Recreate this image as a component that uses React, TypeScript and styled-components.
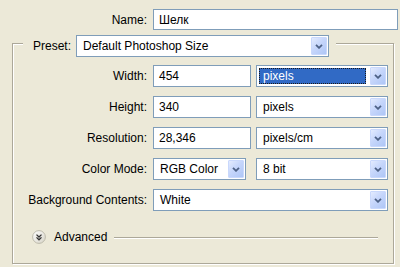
import React from "react";
import styled, { createGlobalStyle } from "styled-components";

const GlobalStyle = createGlobalStyle`
  html, body {
    margin: 0;
    padding: 0;
    background: #ece9d8;
  }
  body {
    font-family: "Liberation Sans", Arial, sans-serif;
    font-size: 12px;
    color: #000;
  }
`;

const Dialog = styled.div`
  width: 400px;
  height: 267px;
  box-sizing: border-box;
  padding-top: 9px;
  overflow: hidden;
  background: #ece9d8;
`;

const NameRow = styled.div`
  display: flex;
  align-items: center;
  gap: 6px;
`;

const Label = styled.span<{ $width?: number }>`
  display: block;
  width: ${(p) => (p.$width ? `${p.$width}px` : "auto")};
  text-align: right;
  white-space: nowrap;
  line-height: 14px;
`;

const TextBox = styled.div<{ $width: number; $height?: number }>`
  box-sizing: border-box;
  width: ${(p) => p.$width}px;
  height: ${(p) => p.$height ?? 22}px;
  border: 1px solid #7f9db9;
  background: #fff;
  padding: 0 5px;
  display: flex;
  align-items: center;
  white-space: nowrap;
  overflow: hidden;
`;

const GroupBox = styled.fieldset`
  margin: 0 6px 0 12px;
  padding: 8px 0 19px 0;
  min-inline-size: 0;
  border: 1px solid #aca899;
  box-shadow: inset 1px 1px 0 #fff, 1px 1px 0 #fff;
`;

const GroupLegend = styled.legend`
  margin-left: 10px;
  padding: 5px 7px 0 10px;
  background: #ece9d8;
  display: flex;
  align-items: center;
  gap: 5px;
`;

const FieldGrid = styled.div`
  display: grid;
  grid-template-columns: 135px 98px 132px;
  grid-auto-rows: 22px;
  column-gap: 5px;
  row-gap: 9px;
  align-items: center;
`;

const GridLabel = styled(Label)`
  padding-right: 1px;
`;

const Span = styled.div<{ $cols?: number }>`
  grid-column: span ${(p) => p.$cols ?? 1};
  display: flex;
`;

const ComboBox = styled.div<{ $width: number }>`
  box-sizing: border-box;
  width: ${(p) => p.$width}px;
  height: 22px;
  border: 1px solid #7f9db9;
  background: #fff;
  padding: 1px;
  display: flex;
  gap: 4px;
`;

const ComboValue = styled.div<{ $selected?: boolean }>`
  flex: 1;
  display: flex;
  align-items: center;
  padding-left: ${(p) => (p.$selected ? 4 : 5)}px;
  margin: ${(p) => (p.$selected ? "1px 0 1px 1px" : "0")};
  white-space: nowrap;
  overflow: hidden;
  background: ${(p) => (p.$selected ? "#316ac5" : "transparent")};
  color: ${(p) => (p.$selected ? "#fff" : "#000")};
  outline: ${(p) => (p.$selected ? "1px dotted #1a1a1a" : "none")};
  outline-offset: -1px;
`;

const ComboButton = styled.div`
  box-sizing: border-box;
  width: 16px;
  border: 1px solid #c9d8fc;
  border-radius: 1px;
  background: linear-gradient(135deg, #e3ebfe 0%, #c6d6fb 45%, #aec6f6 100%);
  display: flex;
  align-items: center;
  justify-content: center;
`;

const AdvancedRow = styled.div`
  display: flex;
  align-items: center;
  gap: 8px;
  margin: 19px 15px 0 19px;
  height: 14px;
`;

const AdvancedText = styled.span`
  line-height: 14px;
`;

const Separator = styled.div`
  flex: 1;
  height: 1px;
  margin-left: -1px;
  background: #aca899;
  box-shadow: 0 1px 0 #fff;
`;

const Chevron = () => (
  <svg width="8" height="5" viewBox="0 0 8 5">
    <path d="M1 0.8 L4 3.8 L7 0.8" fill="none" stroke="#4d6185" strokeWidth="1.8" />
  </svg>
);

const AdvancedIcon = () => (
  <svg width="14" height="14" viewBox="0 0 14 14">
    <defs>
      <linearGradient id="adv" x1="0" y1="0" x2="1" y2="1">
        <stop offset="0" stopColor="#ffffff" />
        <stop offset="1" stopColor="#d6d3c6" />
      </linearGradient>
    </defs>
    <circle cx="7" cy="7" r="6.4" fill="url(#adv)" stroke="#b8b5a6" strokeWidth="0.9" />
    <path d="M4.5 4.6 L7 7 L9.5 4.6 M4.5 7.4 L7 9.8 L9.5 7.4" fill="none" stroke="#333" strokeWidth="1.3" />
  </svg>
);

type ComboProps = { width: number; value: string; selected?: boolean };

const Combo: React.FC<ComboProps> = ({ width, value, selected }) => (
  <ComboBox $width={width}>
    <ComboValue $selected={selected}>{value}</ComboValue>
    <ComboButton>
      <Chevron />
    </ComboButton>
  </ComboBox>
);

const App: React.FC = () => {
  return (
    <Dialog>
      <GlobalStyle />
      <NameRow>
        <Label $width={147}>Name:</Label>
        <TextBox $width={245} $height={21}>Шелк</TextBox>
      </NameRow>

      <GroupBox>
        <GroupLegend>
          <Label>Preset:</Label>
          <Combo width={253} value="Default Photoshop Size" />
        </GroupLegend>

        <FieldGrid>
          <GridLabel>Width:</GridLabel>
          <TextBox $width={98}>454</TextBox>
          <Combo width={132} value="pixels" selected />

          <GridLabel>Height:</GridLabel>
          <TextBox $width={98}>340</TextBox>
          <Combo width={132} value="pixels" />

          <GridLabel>Resolution:</GridLabel>
          <TextBox $width={98}>28,346</TextBox>
          <Combo width={132} value="pixels/cm" />

          <GridLabel>Color Mode:</GridLabel>
          <Combo width={93} value="RGB Color" />
          <Combo width={132} value="8 bit" />

          <GridLabel>Background Contents:</GridLabel>
          <Span $cols={2}>
            <Combo width={235} value="White" />
          </Span>
        </FieldGrid>

        <AdvancedRow>
          <AdvancedIcon />
          <AdvancedText>Advanced</AdvancedText>
          <Separator />
        </AdvancedRow>
      </GroupBox>
    </Dialog>
  );
};

export default App;
